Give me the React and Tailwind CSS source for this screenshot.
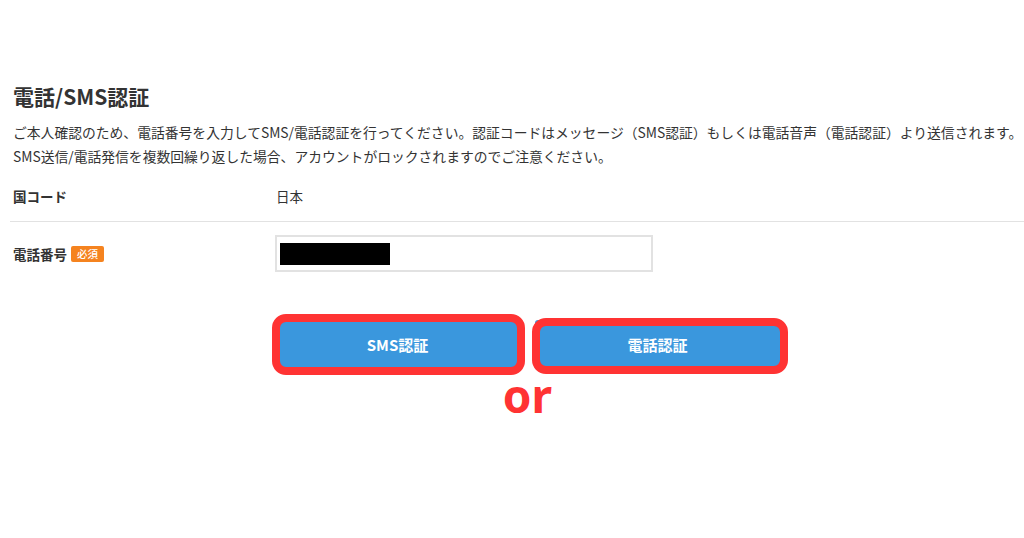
export default function App() {
  const font = { fontFamily: '"Noto Sans CJK JP", "Noto Sans", sans-serif' };
  return (
    <div className="w-[1024px] h-[538px] bg-white overflow-hidden text-[#333]" style={font}>
      <div className="pl-[13px] pt-[80px]">
        <h1 className="text-[21px] font-bold leading-[32px] text-[#333]">電話/SMS認証</h1>
        <div className="mt-[8px] text-[13.8px] leading-[24px] whitespace-nowrap">
          <p>ご本人確認のため、電話番号を入力してSMS/電話認証を行ってください。認証コードはメッセージ（SMS認証）もしくは電話音声（電話認証）より送信されます。</p>
          <p>SMS送信/電話発信を複数回繰り返した場合、アカウントがロックされますのでご注意ください。</p>
        </div>
      </div>

      <div className="ml-[10px]">
        <div className="flex items-center pt-[18px] pb-[15px] pl-[3px] text-[13.5px] leading-[20px]">
          <div className="w-[262px] font-bold text-[#333]">国コード</div>
          <div className="pl-[1px] font-normal">日本</div>
        </div>
        <div className="h-px bg-[#e2e2e2]" />
        <div className="flex items-center pt-[13px] pl-[3px]">
          <div className="w-[262px] flex items-center gap-[4px] text-[13.5px] font-bold leading-[20px]">
            <span>電話番号</span>
            <span className="bg-[#f5831f] text-white text-[10.5px] font-medium leading-[16px] px-[6px] rounded-[2px]">必須</span>
          </div>
          <div className="w-[378px] h-[37px] border-2 border-[#e2e2e2] pl-[3px] pt-[6px]">
            <div className="w-[110px] h-[22px] bg-black" />
          </div>
        </div>
      </div>

      <div className="ml-[275px] mt-[48px] w-[505px]">
        <div className="flex gap-[15px]">
          <div className="relative w-[245px] h-[50px] bg-[#3a97dd] rounded-[3px] flex items-center justify-center text-white text-[15px] font-bold">
            <div className="absolute top-[-6px] left-[-3px] right-[-5px] bottom-[-5px] border-[8px] border-[#ff3333] rounded-[14px]" />
            <span className="relative">SMS認証</span>
          </div>
          <div className="relative w-[245px] h-[50px] bg-[#3a97dd] rounded-[3px] flex items-center justify-center text-white text-[15px] font-bold">
            <div className="absolute top-[-2px] left-[-3px] right-[-8px] bottom-[-4px] border-[8px] border-[#ff3333] rounded-[14px]" />
            <span className="relative">電話認証</span>
          </div>
        </div>
        <div className="text-center text-[#ff3333] text-[46px] font-bold leading-[46px] mt-[2px]" style={{ fontFamily: '"Noto Sans", sans-serif' }}>
          or
        </div>
      </div>
    </div>
  );
}
